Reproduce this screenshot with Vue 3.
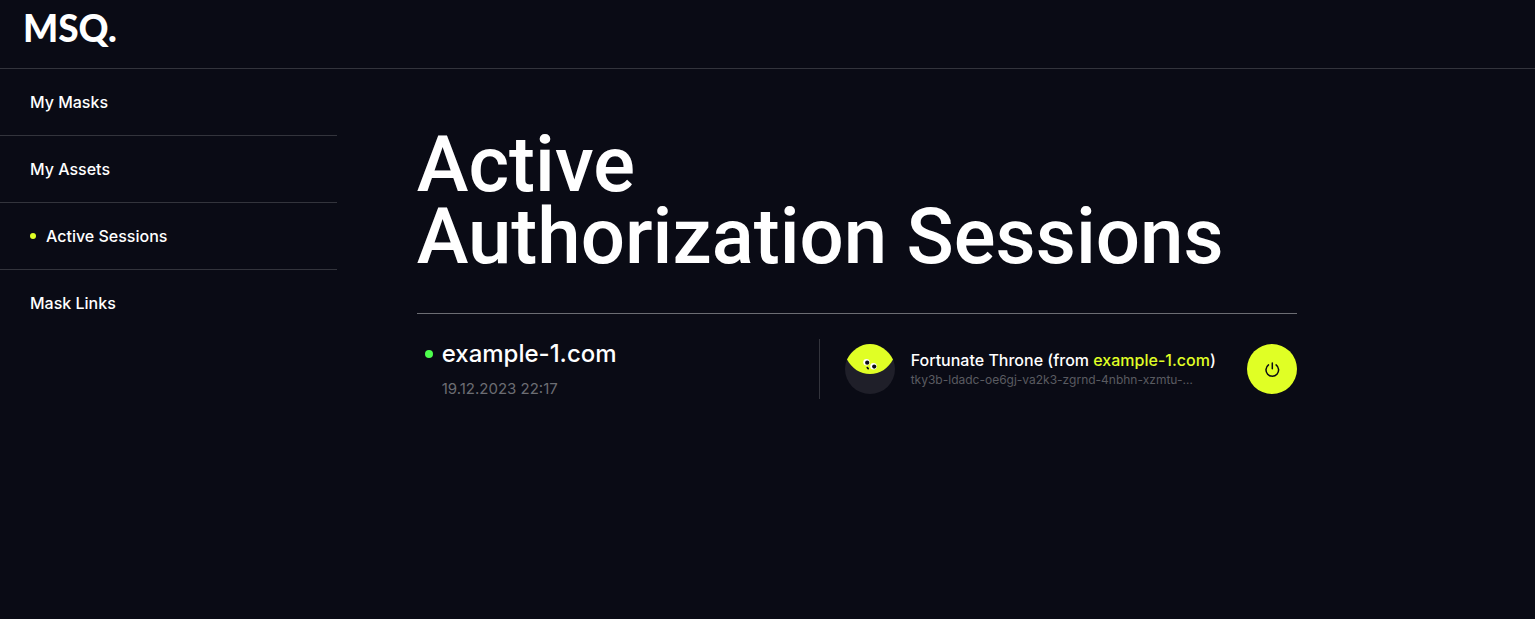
<script setup>
const links = [
  { label: 'My Masks', active: false },
  { label: 'My Assets', active: false },
  { label: 'Active Sessions', active: true },
  { label: 'Mask Links', active: false },
]

const sessions = [
  {
    site: 'example-1.com',
    date: '19.12.2023 22:17',
    mask: 'Fortunate Throne',
    origin: 'example-1.com',
    principal: 'tky3b-ldadc-oe6gj-va2k3-zgrnd-4nbhn-xzmtu-…',
  },
]
</script>

<template>
  <div class="page">
    <header class="header">
      <a class="logo" href="#">MSQ.</a>
    </header>
    <div class="body">
      <nav class="nav">
        <a v-for="link in links" :key="link.label" class="nav-link" href="#">
          <span v-if="link.active" class="nav-dot"></span>{{ link.label }}
        </a>
      </nav>
      <main class="main">
        <h1 class="title">Active<br />Authorization Sessions</h1>
        <section v-for="s in sessions" :key="s.site" class="session">
          <div class="site">
            <div class="site-name"><span class="status"></span>{{ s.site }}</div>
            <time class="date">{{ s.date }}</time>
          </div>
          <div class="mask">
            <svg class="avatar" viewBox="0 0 50 50" aria-hidden="true">
              <circle cx="25" cy="25" r="25" fill="#1f1f29" />
              <path d="M2 15.5C7 6 15.500 0 25 0S43 6 48 15.500C43 24.500 35 30 25 30S7 24.500 2 15.500Z" fill="#e0ff25" />
              <circle cx="21.500" cy="18.300" r="3.200" fill="#fff" />
              <circle cx="28.500" cy="22.300" r="3.200" fill="#fff" />
              <circle cx="22.200" cy="18.700" r="2.100" fill="#0a0b15" />
              <circle cx="29.200" cy="22.600" r="2.100" fill="#0a0b15" />
              <path d="M22.300 23.700L23.200 24.600" stroke="#0a0b15" stroke-width="1.700" stroke-linecap="round" />
            </svg>
            <div class="info">
              <p class="mask-name">{{ s.mask }} (from <span class="accent">{{ s.origin }}</span>)</p>
              <p class="principal">{{ s.principal }}</p>
            </div>
            <button class="power" type="button" aria-label="Log out">
              <svg viewBox="0 0 20 20" fill="none" stroke="#0a0b15" stroke-width="1.500" stroke-linecap="round" aria-hidden="true">
                <path d="M10.300 4V9.800" />
                <path d="M6.500 5.900A6.300 6.300 0 1 0 14.100 5.900" />
              </svg>
            </button>
          </div>
        </section>
      </main>
    </div>
  </div>
</template>

<style>
body {
  margin: 0;
  background: #0a0b15;
}
</style>

<style scoped>
.page {
  min-height: 100vh;
  background: #0a0b15;
  color: #fff;
  font-family: 'Inter', 'Liberation Sans', sans-serif;
}
.header {
  box-sizing: border-box;
  height: 69px;
  padding: 6px 23px;
  border-bottom: 1px solid #33343c;
}
.logo {
  color: #fff;
  font-family: 'Lato', sans-serif;
  font-size: 37px;
  font-weight: 900;
  line-height: 44px;
  text-decoration: none;
}
.body {
  display: flex;
}
.nav {
  width: calc(22% - 1px);
  flex-shrink: 0;
}
.nav-link {
  box-sizing: border-box;
  display: flex;
  align-items: center;
  gap: 10px;
  height: 67px;
  padding: 0 0 1px 30px;
  border-bottom: 1px solid #33343c;
  color: #fff;
  font-size: 16px;
  font-weight: 500;
  line-height: 20px;
  text-decoration: none;
}
.nav-link:last-child {
  border-bottom-color: transparent;
}
.nav-dot {
  width: 6px;
  height: 6px;
  border-radius: 50%;
  background: #e0ff25;
}
.main {
  flex: 1;
  min-width: 0;
  max-width: 880px;
  padding: 60px 80px 0;
}
.title {
  margin: 0 0 40px;
  font-family: 'Roboto', sans-serif;
  font-size: 78px;
  font-weight: 500;
  line-height: 72px;
  white-space: nowrap;
}
.session {
  display: flex;
  align-items: center;
  padding-top: 25px;
  border-top: 1px solid #6c6d73;
}
.site {
  flex: 1;
  padding-left: 8px;
}
.site-name {
  display: flex;
  align-items: center;
  gap: 9px;
  font-size: 24px;
  font-weight: 500;
  line-height: 30px;
}
.status {
  width: 8px;
  height: 8px;
  border-radius: 50%;
  background: #4dff4d;
}
.date {
  display: block;
  margin: 9px 0 0 17px;
  color: #6c6d73;
  font-size: 15px;
  line-height: 21px;
}
.mask {
  box-sizing: border-box;
  display: flex;
  align-items: center;
  width: 478px;
  height: 60px;
  padding-left: 25px;
  border-left: 1px solid #33343c;
}
.avatar {
  width: 50px;
  height: 50px;
  flex-shrink: 0;
}
.info {
  flex: 1;
  min-width: 0;
  margin-left: 16px;
}
.mask-name,
.principal {
  margin: 0;
  white-space: nowrap;
}
.mask-name {
  font-size: 16px;
  font-weight: 500;
  line-height: 21px;
}
.accent {
  color: #e0ff25;
}
.principal {
  color: #5a5b61;
  font-size: 12px;
  line-height: 17px;
}
.power {
  display: flex;
  align-items: center;
  justify-content: center;
  width: 50px;
  height: 50px;
  padding: 0;
  border: 0;
  border-radius: 50%;
  background: #e0ff25;
  cursor: pointer;
}
.power svg {
  width: 20px;
  height: 20px;
}
</style>
